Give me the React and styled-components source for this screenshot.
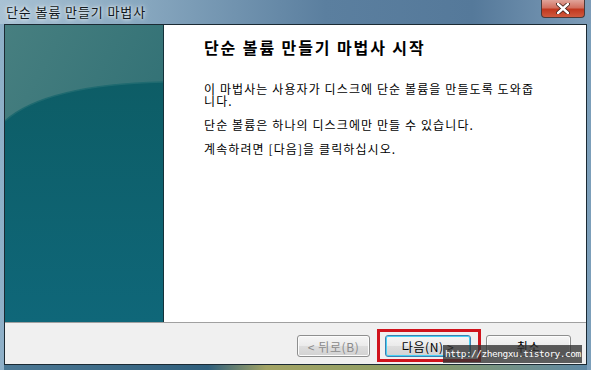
import React from "react";
import styled, { createGlobalStyle } from "styled-components";

const Global = createGlobalStyle`
  html, body { margin: 0; padding: 0; background: #6e90ad; }
  body { font-family: "Noto Sans CJK KR", "Noto Sans", sans-serif; }
`;

const Window = styled.div`
  width: 591px;
  height: 370px;
  display: flex;
  flex-direction: column;
  background: linear-gradient(90deg, #8fb0c8 0%, #6f93b1 30%, #5d84a5 60%, #7c9fba 100%);
  position: relative;
  overflow: hidden;
`;

const TitleBar = styled.div`
  height: 24px;
  display: flex;
  align-items: flex-start;
  justify-content: space-between;
  padding: 0 5px 0 6px;
  background: linear-gradient(90deg, #a9c2d4 0%, #86a6be 25%, #5b7f9f 55%, #55799a 80%, #7d9cb8 100%);
  flex-shrink: 0;
`;

const Title = styled.span`
  font-size: 13px;
  letter-spacing: 0.9px;
  color: #101820;
  line-height: 13px;
  margin-top: 5px;
  text-shadow: 0 0 6px rgba(255,255,255,0.9), 0 0 3px rgba(255,255,255,0.9);
`;

const CloseBtn = styled.div`
  width: 44px;
  height: 18px;
  margin-right: 1px;
  border: 1px solid #4b3a3a;
  border-top: none;
  border-radius: 0 0 4px 4px;
  background: linear-gradient(180deg, #e0a49a 0%, #d2705f 45%, #c1381f 55%, #cf5a3e 100%);
  display: flex;
  align-items: center;
  justify-content: center;
  box-sizing: border-box;
`;

const Inner = styled.div`
  margin: 0 4px;
  height: 341px;
  border: 1px solid #1b2a33;
  display: flex;
  flex-direction: column;
  background: #f0f0f0;
  box-sizing: border-box;
`;

const Main = styled.div`
  display: flex;
  height: 297px;
  border-bottom: 1px solid #a0a0a0;
  flex-shrink: 0;
`;

const Side = styled.div`
  width: 158px;
  position: relative;
  border-right: 1px solid #15323a;
  background: #0e6171;
  overflow: hidden;
`;

const SideArt = styled.svg`
  position: absolute;
  inset: 0;
`;

const Content = styled.div`
  flex: 1;
  background: #ffffff;
  padding: 12px 20px 0 40px;
  display: flex;
  flex-direction: column;
`;

const Heading = styled.h1`
  margin: 0;
  font-size: 16px;
  font-weight: 700;
  color: #000;
  line-height: 20px;
  letter-spacing: 1.9px;
`;

const Para = styled.p`
  margin: ${p => p.$top}px 0 0;
  font-size: 12px;
  line-height: 12px;
  color: #000;
  width: 340px;
  letter-spacing: 1.1px;
`;

const Footer = styled.div`
  flex: 1;
  display: flex;
  align-items: flex-start;
  padding: 12px 0 0 292px;
  position: relative;
`;

const Button = styled.div`
  width: ${p => p.$w}px;
  height: 22px;
  margin-left: ${p => p.$ml}px;
  box-sizing: border-box;
  border: 1px solid ${p => (p.$focus ? "#3c7fb1" : "#8e8f8f")};
  border-radius: 3px;
  background: linear-gradient(180deg, #f6f6f6 0%, #ebebeb 48%, #dddddd 52%, #d2d2d2 100%);
  box-shadow: inset 0 0 0 1px ${p => (p.$focus ? "#48d0f4" : "#fcfcfc")};
  display: flex;
  align-items: center;
  justify-content: center;
  font-size: 12px;
  letter-spacing: 0.6px;
  color: ${p => (p.$disabled ? "#8a8a8a" : "#000")};
`;

const Highlight = styled.div`
  position: absolute;
  left: 372px;
  top: 6px;
  width: 104px;
  height: 33px;
  border: 3px solid #d0131c;
  box-sizing: border-box;
`;

const Watermark = styled.div`
  position: absolute;
  left: 443px;
  top: 345px;
  width: 139px;
  height: 18px;
  background: rgba(50, 50, 50, 0.78);
  color: #ffffff;
  font-family: "DejaVu Sans Mono", monospace;
  font-size: 9.5px;
  line-height: 18px;
  padding-left: 2px;
  box-sizing: border-box;
  letter-spacing: -0.5px;
  white-space: nowrap;
  overflow: hidden;
`;

const BottomEdge = styled.div`
  flex: 1;
  margin: 0 4px;
  background: linear-gradient(90deg, #4c7894 0%, #2f5f7c 35%, #a3a465 45%, #8c9d63 70%, #5f88a4 100%);
`;

export default function App() {
  return (
    <>
      <Global />
      <Window>
        <TitleBar>
          <Title>단순 볼륨 만들기 마법사</Title>
          <CloseBtn>
            <svg width="14" height="11" viewBox="0 0 14 11">
              <path d="M2 1 L12 10 M12 1 L2 10" stroke="#3a1a14" strokeWidth="4" strokeLinecap="round" />
              <path d="M2 1 L12 10 M12 1 L2 10" stroke="#ffffff" strokeWidth="2.4" strokeLinecap="round" />
            </svg>
          </CloseBtn>
        </TitleBar>
        <Inner>
          <Main>
            <Side>
              <SideArt width="158" height="297" viewBox="0 0 158 297">
                <defs>
                  <linearGradient id="top" x1="0" y1="0" x2="1" y2="1">
                    <stop offset="0" stopColor="#477f80" />
                    <stop offset="1" stopColor="#276a70" />
                  </linearGradient>
                  <linearGradient id="bot" x1="0" y1="0" x2="0" y2="1">
                    <stop offset="0" stopColor="#0d5d66" />
                    <stop offset="1" stopColor="#0f6779" />
                  </linearGradient>
                </defs>
                <rect x="0" y="0" width="158" height="297" fill="url(#top)" />
                <path d="M0 96 Q40 60 158 57 L158 297 L0 297 Z" fill="url(#bot)" />
                <path d="M0 96 Q40 60 158 57" stroke="#1f6a70" strokeWidth="1.5" fill="none" />
              </SideArt>
            </Side>
            <Content>
              <Heading>단순 볼륨 만들기 마법사 시작</Heading>
              <Para $top={26}>이 마법사는 사용자가 디스크에 단순 볼륨을 만들도록 도와줍니다.</Para>
              <Para $top={12}>단순 볼륨은 하나의 디스크에만 만들 수 있습니다.</Para>
              <Para $top={12}>계속하려면 [다음]을 클릭하십시오.</Para>
            </Content>
          </Main>
          <Footer>
            <Button $w={73} $ml={0} $disabled>&lt; 뒤로(B)</Button>
            <Button $w={86} $ml={15} $focus>다음(N) &gt;</Button>
            <Button $w={85} $ml={15}>취소</Button>
            <Highlight />
          </Footer>
        </Inner>
        <BottomEdge />
        <Watermark>http://zhengxu.tistory.com</Watermark>
      </Window>
    </>
  );
}
